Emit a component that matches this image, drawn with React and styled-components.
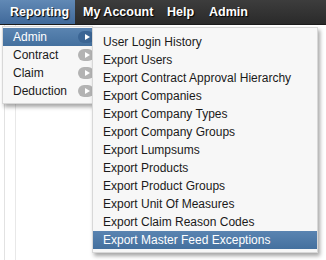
import React from 'react'
import styled, { createGlobalStyle } from 'styled-components'

const GlobalStyle = createGlobalStyle`
  html, body { margin: 0; padding: 0; background: #fff; }
  body { font-family: "Liberation Sans", Arial, sans-serif; }
`

const Page = styled.div`
  position: relative;
  width: 326px;
  height: 260px;
  overflow: hidden;
  background: #fff;
`

const Rails = styled.div`
  display: flex;
  height: 236px;
  padding-left: 4px;
  div {
    width: 10px;
    border-left: 1px solid #e2e2e2;
    border-right: 1px solid #e8e8e8;
  }
`

const TopBar = styled.ul`
  display: flex;
  margin: 0;
  padding: 0;
  list-style: none;
  height: 24px;
  background: linear-gradient(#3d3d3d, #2a2a2a);
  border-bottom: 1px solid #1c1c1c;
`

const TopItem = styled.li`
  position: relative;
  width: ${p => p.$width}px;
  padding-left: ${p => p.$left || 8}px;
  line-height: 25px;
  font-size: 12.5px;
  font-weight: bold;
  color: #fff;
  text-shadow: 1px 1px 1px #000;
  background: ${p => p.$active ? 'linear-gradient(#6189b5, #40699a)' : 'transparent'};
`

const Flyout = styled.ul`
  position: absolute;
  margin: 0;
  list-style: none;
  background: #f7f7f7;
  border: 1px solid #d8d8d8;
  box-shadow: 2px 3px 4px rgba(0, 0, 0, 0.35);
  font-weight: normal;
  text-shadow: none;
`

const SubMenu = styled(Flyout)`
  top: 26px;
  left: 2px;
  width: 89px;
  padding: 1px 0 3px;
`

const ExportMenu = styled(Flyout)`
  top: 27px;
  left: 92px;
  width: 224px;
  padding: 5px 0 3px;
  z-index: 2;
`

const Row = styled.li`
  display: flex;
  align-items: center;
  justify-content: space-between;
  height: 18px;
  padding: 0 0 0 ${p => p.$indent}px;
  font-size: 12px;
  line-height: 18px;
  color: ${p => p.$active ? '#fff' : '#1a1a1a'};
  background: ${p => p.$active ? 'linear-gradient(#5a84b1, #44709e)' : 'transparent'};
`

const Arrow = styled.span`
  display: flex;
  align-items: center;
  justify-content: center;
  width: 16px;
  height: 12px;
  margin-right: -2px;
  border-radius: 6px;
  background: ${p => p.$active ? '#3b6594' : '#b3b3b3'};
  &::after {
    content: '';
    margin-left: 2px;
    border-left: 5px solid #fff;
    border-top: 3px solid transparent;
    border-bottom: 3px solid transparent;
  }
`

const categories = ['Admin', 'Contract', 'Claim', 'Deduction']

const exports = [
  'User Login History',
  'Export Users',
  'Export Contract Approval Hierarchy',
  'Export Companies',
  'Export Company Types',
  'Export Company Groups',
  'Export Lumpsums',
  'Export Products',
  'Export Product Groups',
  'Export Unit Of Measures',
  'Export Claim Reason Codes',
  'Export Master Feed Exceptions',
]

export default function App() {
  return (
    <Page>
      <GlobalStyle />
      <TopBar>
        <TopItem $active $left={10} $width={65}>Reporting</TopItem>
        <TopItem $width={76}>My Account</TopItem>
        <TopItem $width={34}>Help</TopItem>
        <TopItem $width={50}>Admin</TopItem>
      </TopBar>
      <Rails><div /></Rails>
      <SubMenu>
        {categories.map((c, i) => (
          <Row key={c} $indent={10} $active={i === 0}>
            {c}
            <Arrow $active={i === 0} />
          </Row>
        ))}
      </SubMenu>
      <ExportMenu>
        {exports.map((e, i) => (
          <Row key={e} $indent={10} $active={i === exports.length - 1}>{e}</Row>
        ))}
      </ExportMenu>
    </Page>
  )
}
